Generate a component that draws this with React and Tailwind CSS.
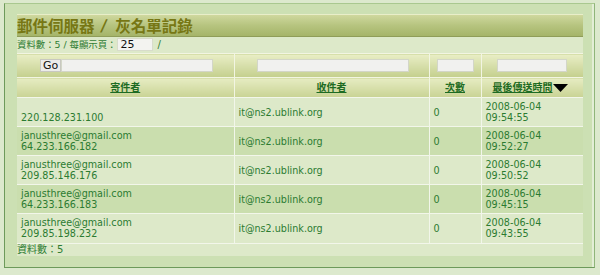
const ROWS = [
  { from: "", ip: "220.128.231.100", to: "it@ns2.ublink.org", count: 0, date: "2008-06-04", time: "09:54:55" },
  { from: "janusthree@gmail.com", ip: "64.233.166.182", to: "it@ns2.ublink.org", count: 0, date: "2008-06-04", time: "09:52:27" },
  { from: "janusthree@gmail.com", ip: "209.85.146.176", to: "it@ns2.ublink.org", count: 0, date: "2008-06-04", time: "09:50:52" },
  { from: "janusthree@gmail.com", ip: "64.233.166.183", to: "it@ns2.ublink.org", count: 0, date: "2008-06-04", time: "09:45:15" },
  { from: "janusthree@gmail.com", ip: "209.85.198.232", to: "it@ns2.ublink.org", count: 0, date: "2008-06-04", time: "09:43:55" },
];

const cjk = "font-['DejaVu_Sans','Noto_Sans_CJK_TC',sans-serif]";
const filterCell = "border-t border-[#f2f5e2] bg-gradient-to-b from-[#e9eec6] to-[#c4cf8d]";
const headCell = "border-t border-[#f2f5e2] bg-gradient-to-b from-[#e6ecc2] to-[#c9d394]";
const box = "h-[13px] bg-[#f1f1ef] border border-[#d3d6c8]";

export default function App() {
  return (
    <div className={`w-[600px] h-[275px] bg-[#dce9cd] pt-[3px] pl-[4px] ${cjk}`}>
      <div className="w-[591px] h-[265px] border border-[#6d9a5b] border-t-[#a9c88f] border-r-[#8fb57a] bg-[#cce0b3] pl-[12px] pt-[10px] shadow-[inset_-2px_0_0_#e3eed6]">
        <div className="w-[566px] bg-[#dde9c9]">
          <div className="h-[22px] flex items-center border-t border-[#e8eec9] bg-gradient-to-b from-[#cfd89e] via-[#b6c47f] to-[#a5b469] shadow-[0_1px_0_#8f9d58]">
            <span className="flex items-center text-[15.5px] font-bold text-[#777714] leading-none font-['Noto_Sans_CJK_TC',sans-serif]">
              郵件伺服器
              <span className="ml-[6px] mr-[9px] font-['DejaVu_Sans',sans-serif] text-[16px] skew-x-[-8deg]">/</span>
              灰名單記錄
            </span>
          </div>

          <div className="h-[17px] flex items-center text-[9.4px] text-[#2f7d34] leading-none">
            <span>資料數：5 / 每顯示頁：</span>
            <span className="ml-[1px] w-[36px] h-[13px] bg-[#f3f3f0] border border-[#d8dccb] text-[#111] text-[11px] pl-[2px] leading-[12px]">
              25
            </span>
            <span className="ml-[4px] text-[10px]">/</span>
          </div>

          <table className="w-[566px] border-collapse table-fixed">
            <colgroup>
              <col className="w-[217px]" />
              <col className="w-[195px]" />
              <col className="w-[52px]" />
              <col className="w-[102px]" />
            </colgroup>
            <thead>
              <tr className="h-[24px]">
                <td className={`border-r ${filterCell} pl-[23px]`}>
                  <div className="flex items-center h-[13px]">
                    <span className="h-[13px] px-[2px] bg-[#ececea] border border-[#c8c8c0] text-[11px] leading-[11px] text-[#111]">Go</span>
                    <span className={`w-[152px] ${box}`} />
                  </div>
                </td>
                <td className={`border-r ${filterCell} pl-[22px]`}>
                  <div className={`w-[152px] ${box}`} />
                </td>
                <td className={`border-r ${filterCell} pl-[7px]`}>
                  <div className={`w-[37px] ${box}`} />
                </td>
                <td className={`${filterCell} pl-[15px]`}>
                  <div className={`w-[70px] ${box}`} />
                </td>
              </tr>
              <tr className="h-[20px] text-[10px] font-bold text-[#1d6b22] text-center">
                <th className={`border-r ${headCell}`}>
                  <span className="underline">寄件者</span>
                </th>
                <th className={`border-r ${headCell}`}>
                  <span className="underline">收件者</span>
                </th>
                <th className={`border-r ${headCell}`}>
                  <span className="underline">次數</span>
                </th>
                <th className={`${headCell} pl-[11px] text-left`}>
                  <span className="inline-flex items-center">
                    <span className="underline">最後傳送時間</span>
                    <svg width="15" height="8" viewBox="0 0 15 8">
                      <polygon points="0,0 15,0 7.5,8" fill="#000" />
                    </svg>
                  </span>
                </th>
              </tr>
            </thead>
            <tbody className="text-[9.6px] leading-[11px] text-[#2b7b31]">
              {ROWS.map((r, i) => (
                <tr
                  key={i}
                  className={`h-[29px] ${i % 2 === 0 ? "bg-[#dde9c9]" : "bg-[#cadeae]"}`}
                >
                  <td className="border-r border-t border-[#f2f6ea] pl-[4px]">
                    <div className="h-[11px]">{r.from}</div>
                    <div>{r.ip}</div>
                  </td>
                  <td className="border-r border-t border-[#f2f6ea] pl-[4px]">{r.to}</td>
                  <td className="border-r border-t border-[#f2f6ea] pl-[4px]">{r.count}</td>
                  <td className="border-t border-[#f2f6ea] pl-[4px]">
                    <div>{r.date}</div>
                    <div>{r.time}</div>
                  </td>
                </tr>
              ))}
            </tbody>
          </table>

          <div className="h-[13px] border-t border-[#f2f6ea] flex items-center text-[10px] leading-none text-[#2f7d34]">
            資料數：5
          </div>
        </div>
      </div>
    </div>
  );
}
